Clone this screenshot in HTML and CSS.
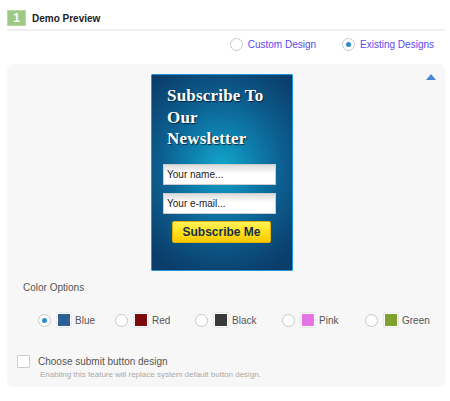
FILE: index.html
```html
<!DOCTYPE html>
<html>
<head>
<meta charset="utf-8">
<link rel="stylesheet" href="styles.css">
</head>
<body>
<div class="page">
  <div class="header">
    <span class="badge">1</span>
    <span class="title">Demo Preview</span>
  </div>
  <div class="modes">
    <label class="mode"><span class="radio"></span>Custom Design</label>
    <label class="mode"><span class="radio checked"></span>Existing Designs</label>
  </div>
  <div class="panel">
    <span class="collapse"></span>
    <div class="preview">
      <div class="promo">
        <h2 class="promo-title">Subscribe To Our Newsletter</h2>
        <div class="field">Your name...</div>
        <div class="field">Your e-mail...</div>
        <div class="button">Subscribe Me</div>
      </div>
    </div>
    <div class="section-label">Color Options</div>
    <div class="colors">
      <label class="color"><span class="radio checked"></span><span class="swatch blue"></span>Blue</label>
      <label class="color"><span class="radio"></span><span class="swatch red"></span>Red</label>
      <label class="color"><span class="radio"></span><span class="swatch black"></span>Black</label>
      <label class="color"><span class="radio"></span><span class="swatch pink"></span>Pink</label>
      <label class="color"><span class="radio"></span><span class="swatch green"></span>Green</label>
    </div>
    <div class="option">
      <span class="checkbox"></span>
      <div class="option-text">
        <div class="option-label">Choose submit button design</div>
        <div class="option-desc">Enabling this feature will replace system default button design.</div>
      </div>
    </div>
  </div>
</div>
</body>
</html>
```
FILE: styles.css
```css
* { box-sizing: border-box; }
html, body { margin: 0; padding: 0; background: #fff; }
body { font-family: "Liberation Sans", Arial, sans-serif; color: #555; }
.page { padding: 10px 5px 0 7px; width: 450px; }

.header {
  display: flex;
  align-items: center;
  height: 21px;
  padding-bottom: 3px;
  border-bottom: 2px solid #f0f0f0;
}
.badge {
  width: 19px; height: 16px;
  background: #9dc985;
  border: 1px solid #b8d8a4;
  color: #fff;
  font-weight: bold;
  font-size: 12px;
  line-height: 14px;
  text-align: center;
  margin-right: 6px;
}
.title { font-size: 10px; font-weight: bold; color: #222; }

.modes {
  display: flex;
  justify-content: flex-end;
  align-items: center;
  height: 26px;
  padding-right: 11px;
}
.mode {
  display: flex; align-items: center;
  font-size: 10px;
  color: #5a48ee;
}
.mode + .mode { margin-left: 26px; }
.mode .radio { margin-right: 5px; }

.radio {
  width: 13px; height: 13px;
  border-radius: 50%;
  border: 1px solid #c8c8c8;
  background: #fff;
  display: inline-flex; align-items: center; justify-content: center;
  flex: none;
}
.radio.checked::after {
  content: "";
  width: 5px; height: 5px;
  border-radius: 50%;
  background: #2a8bd0;
}

.panel {
  position: relative;
  margin-top: 7px;
  width: 438px;
  height: 323px;
  background: #f7f7f7;
  border-radius: 6px;
  padding-top: 10px;
}
.collapse {
  position: absolute;
  right: 9px; top: 10px;
  width: 0; height: 0;
  border-left: 5px solid transparent;
  border-right: 5px solid transparent;
  border-bottom: 6px solid #4a86d6;
}
.preview { padding-left: 144px; }
.promo {
  width: 142px; height: 197px;
  border: 1px solid #1f95d6;
  border-radius: 1px;
  background: radial-gradient(ellipse 75% 60% at 50% 47%, #13a6cc 0%, #0e80ae 30%, #0c5d8e 60%, #0b4775 85%, #0a3d69 100%);
  padding: 10px 11px 0 11px;
}
.promo-title {
  margin: 0 0 14px 4px;
  font-family: "Liberation Serif", "Times New Roman", serif;
  font-weight: bold;
  font-size: 17px;
  line-height: 21.5px;
  color: #fff;
  text-shadow: 1px 1px 1px #06233d;
  width: 110px;
  letter-spacing: 0.2px;
}
.field {
  width: 113px; height: 21px;
  background: linear-gradient(#dcdcdc, #fff 45%, #fff);
  border: 1px solid #ccc;
  font-size: 10px;
  color: #222;
  line-height: 19px;
  padding-left: 3px;
  margin-bottom: 8px;
}
.button {
  margin: -1px 0 0 9px;
  width: 99px; height: 22px;
  background: linear-gradient(#fff25a, #ffe01a 50%, #f8c800);
  border: 1px solid #e0b100;
  border-radius: 2px;
  font-size: 12px;
  font-weight: bold;
  color: #16304f;
  text-align: center;
  line-height: 20px;
}

.section-label {
  font-size: 10px;
  margin: 11px 0 0 16px;
  line-height: 12px;
}
.colors {
  display: grid;
  grid-template-columns: 77px 80px 87px 83px auto;
  margin: 19px 0 0 31px;
  align-items: center;
}
.color { display: flex; align-items: center; font-size: 10px; color: #555; }
.color .radio { margin-right: 6px; }
.swatch {
  width: 14px; height: 14px;
  margin-right: 4px;
  border: 1px solid #fff;
  box-shadow: 0 0 0 0.5px #ddd;
}
.swatch.blue { background: #2e5f92; }
.swatch.red { background: #7c0b0b; }
.swatch.black { background: #3a3a3a; }
.swatch.pink { background: #e672e6; }
.swatch.green { background: #7ca32e; }

.option {
  display: flex;
  margin: 28px 0 0 10px;
}
.checkbox {
  width: 13px; height: 13px;
  border: 1px solid #ccc;
  background: #fff;
  border-radius: 1px;
  margin-right: 8px;
  flex: none;
}
.option-label { font-size: 10px; line-height: 13px; color: #555; }
.option-desc { font-size: 8px; color: #aaa; margin: 2px 0 0 2px; }
```
